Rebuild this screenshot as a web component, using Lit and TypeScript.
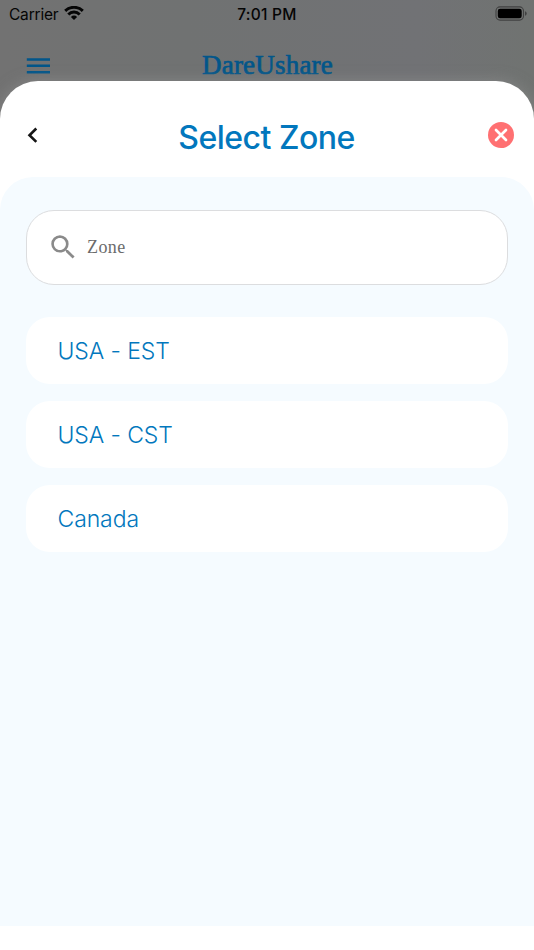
import { LitElement, html, css } from "lit";
import { customElement } from "lit/decorators.js";

const ZONES = ["USA - EST", "USA - CST", "Canada"];

@customElement("app-root")
class AppRoot extends LitElement {
  static styles = css`
    :host {
      display: flex;
      flex-direction: column;
      width: 534px;
      height: 950px;
      overflow: hidden;
      background: linear-gradient(90deg, #727272 0%, #707272 35%, #717275 78%, #707371 100%);
      font-family: Inter, "Liberation Sans", sans-serif;
    }
    * { box-sizing: border-box; }
    svg { display: block; flex: none; }
    .status {
      display: grid;
      grid-template-columns: 1fr auto 1fr;
      align-items: center;
      height: 27px;
      padding: 0 7px 0 9px;
      color: #050505;
      font-size: 15.5px;
      line-height: 27px;
    }
    .carrier { display: flex; align-items: center; gap: 6px; letter-spacing: -0.2px; }
    .carrier span, .time { padding-top: 2px; line-height: 25px; }
    .carrier svg { margin-bottom: 1px; }
    .time { font-weight: 500; letter-spacing: 0.25px; margin-left: -2px; }
    .battery { justify-self: end; }
    .appbar {
      display: grid;
      grid-template-columns: 1fr auto 1fr;
      align-items: center;
      height: 54px;
      padding: 0 26px;
      color: #02568a;
    }
    .menu { margin-top: 23px; }
    .brand {
      margin: 21px 0 0 1px;
      font: 27px/30px "Liberation Serif", serif;
      letter-spacing: 0.2px;
      -webkit-text-stroke: 0.7px currentColor;
    }
    .sheet {
      flex: 1;
      display: flex;
      flex-direction: column;
      background: #fff;
      border-radius: 38px 38px 0 0;
      box-shadow: 0 0 14px 1px rgba(150, 150, 150, 0.5);
      padding-bottom: 24px;
    }
    .head {
      display: grid;
      grid-template-columns: 1fr auto 1fr;
      align-items: center;
      height: 96px;
      padding: 12px 20px 0 20px;
    }
    .back { margin-left: 6px; }
    .title {
      margin: 5px 1px 0 0;
      color: #0277bd;
      font-size: 32px;
      font-weight: 500;
      line-height: 40px;
      letter-spacing: -0.5px;
    }
    .close { justify-self: end; }
    .body {
      flex: 1;
      background: #f5fbff;
      border-radius: 33px 33px 0 0;
      padding: 33px 26px 0;
    }
    .search {
      display: flex;
      align-items: center;
      gap: 12px;
      height: 75px;
      padding: 0 0 2px 24px;
      background: #fff;
      border: 1px solid #dcdddf;
      border-bottom-width: 1.5px;
      border-radius: 28px;
      color: #6b6b6b;
      font: 18px/24px "Liberation Serif", serif;
      letter-spacing: 0.4px;
    }
    .list { display: grid; gap: 17px; margin-top: 32px; }
    .zone {
      display: flex;
      align-items: center;
      height: 67px;
      padding: 1px 0 0 31.5px;
      background: #fff;
      border-radius: 24px;
      color: #0277bd;
      font-size: 23px;
      font-weight: 350;
      letter-spacing: -0.1px;
    }
  `;

  render() {
    return html`
      <div class="status">
        <div class="carrier">
          <span>Carrier</span>
          <svg width="20" height="14" viewBox="0 0 20 14" fill="none" stroke="#050505" stroke-width="2.9">
            <path d="M1.2 4.9 A12.5 12.5 0 0 1 18.8 4.9" />
            <path d="M4.3 8.4 A8 8 0 0 1 15.7 8.4" />
            <path d="M10 14 L6.9 10.9 A4.4 4.4 0 0 1 13.1 10.9Z" fill="#050505" stroke="none" />
          </svg>
        </div>
        <span class="time">7:01 PM</span>
        <svg class="battery" width="32" height="15" viewBox="0 0 32 15">
          <rect x="1" y=".9" width="27.5" height="13.2" rx="4" fill="none" stroke="#404141" stroke-width="1.1" />
          <rect x="2.8" y="2.7" width="23.9" height="9.6" rx="2.3" fill="#000" />
          <path d="M30 5.2 Q31.7 5.8 31.7 7.5 Q31.7 9.2 30 9.8Z" fill="#404141" />
        </svg>
      </div>
      <div class="appbar">
        <svg class="menu" width="24" height="18" viewBox="0 0 24 18" fill="currentColor">
          <path d="M.8 1.2h23.4v2.5H.8zM.8 7.6h23.4v2.5H.8zM.8 14h23.4v2.5H.8z" />
        </svg>
        <span class="brand">DareUshare</span>
      </div>
      <div class="sheet">
        <div class="head">
          <svg class="back" width="13" height="18" viewBox="0 0 13 18" fill="none" stroke="#151515" stroke-width="2.6">
            <path d="M10.3 2.5 L3.5 9.2 L10.3 15.9" />
          </svg>
          <span class="title">Select Zone</span>
          <svg class="close" width="26" height="26" viewBox="0 0 26 26">
            <circle cx="13" cy="13" r="13" fill="#ff7072" />
            <path d="M8 8 L18 18 M18 8 L8 18" stroke="#fff" stroke-width="2.7" stroke-linecap="round" />
          </svg>
        </div>
        <div class="body">
          <div class="search">
            <svg width="24" height="24" viewBox="2.8 2.8 18 18" fill="#8a8a8a">
              <path d="M15.5 14h-.79l-.28-.27A6.471 6.471 0 0 0 16 9.5 6.5 6.5 0 1 0 9.5 16c1.61 0 3.09-.59 4.23-1.57l.27.28v.79l5 4.99L20.49 19l-4.99-5zm-6 0C7.01 14 5 11.99 5 9.5S7.01 5 9.5 5 14 7.01 14 9.5 11.99 14 9.5 14z" />
            </svg>
            <span>Zone</span>
          </div>
          <div class="list">
            ${ZONES.map((z) => html`<div class="zone">${z}</div>`)}
          </div>
        </div>
      </div>
    `;
  }
}
